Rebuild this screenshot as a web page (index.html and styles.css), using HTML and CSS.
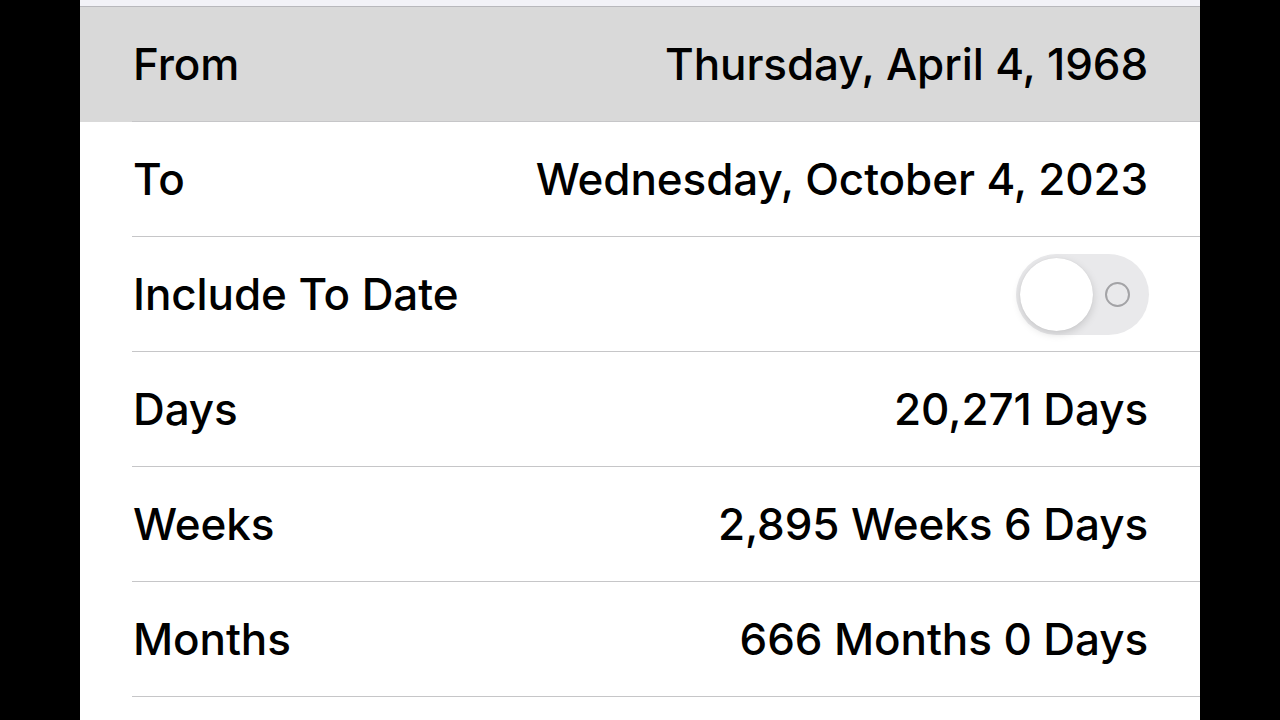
FILE: index.html
```html
<!DOCTYPE html>
<html>
<head>
<meta charset="utf-8">
<link rel="stylesheet" href="styles.css">
</head>
<body>
<div class="screen">
  <div class="strip"></div>
  <div class="row selected"><div class="inner"><span class="label">From</span><span class="value">Thursday, April 4, 1968</span></div></div>
  <div class="row"><div class="inner"><span class="label">To</span><span class="value">Wednesday, October 4, 2023</span></div></div>
  <div class="row"><div class="inner"><span class="label">Include To Date</span>
    <span class="toggle"><span class="knob"></span><span class="ring"></span></span></div></div>
  <div class="row"><div class="inner"><span class="label">Days</span><span class="value">20,271 Days</span></div></div>
  <div class="row"><div class="inner"><span class="label">Weeks</span><span class="value">2,895 Weeks 6 Days</span></div></div>
  <div class="row"><div class="inner"><span class="label">Months</span><span class="value">666 Months 0 Days</span></div></div>
  <div class="rest"></div>
</div>
</body>
</html>
```
FILE: styles.css
```css
html, body { margin: 0; padding: 0; background: #000; height: 720px; overflow: hidden; }
.screen {
  margin: 0 80px;
  width: 1120px;
  height: 720px;
  background: #fff;
  font-family: Inter, "Noto Sans", sans-serif;
  color: #000;
}
.strip { height: 6px; background: #f2f2f7; border-bottom: 1px solid #b8b8bc; }
.row { padding-left: 52px; background: #fff; }
.row.selected { background: #d9d9d9; }
.inner {
  height: 114px;
  border-bottom: 1px solid #c6c6c8;
  display: flex;
  align-items: center;
  justify-content: space-between;
  padding-right: 52px;
  padding-left: 1px;
}
.label, .value { font-size: 44px; font-weight: 500; letter-spacing: -0.1px; }
.toggle {
  position: relative;
  width: 133px;
  height: 81px;
  border-radius: 41px;
  background: #e9e9eb;
  margin-top: 1px;
  margin-right: -1px;
}
.knob {
  position: absolute;
  left: 4px; top: 4px;
  width: 73px; height: 73px;
  border-radius: 50%;
  background: #fff;
  box-shadow: 0 3px 8px rgba(0,0,0,0.15), 0 0 1px rgba(0,0,0,0.1);
}
.ring {
  position: absolute;
  left: 89px; top: 28px;
  width: 21px; height: 21px;
  border-radius: 50%;
  border: 2px solid #a3a3a6;
}
```
